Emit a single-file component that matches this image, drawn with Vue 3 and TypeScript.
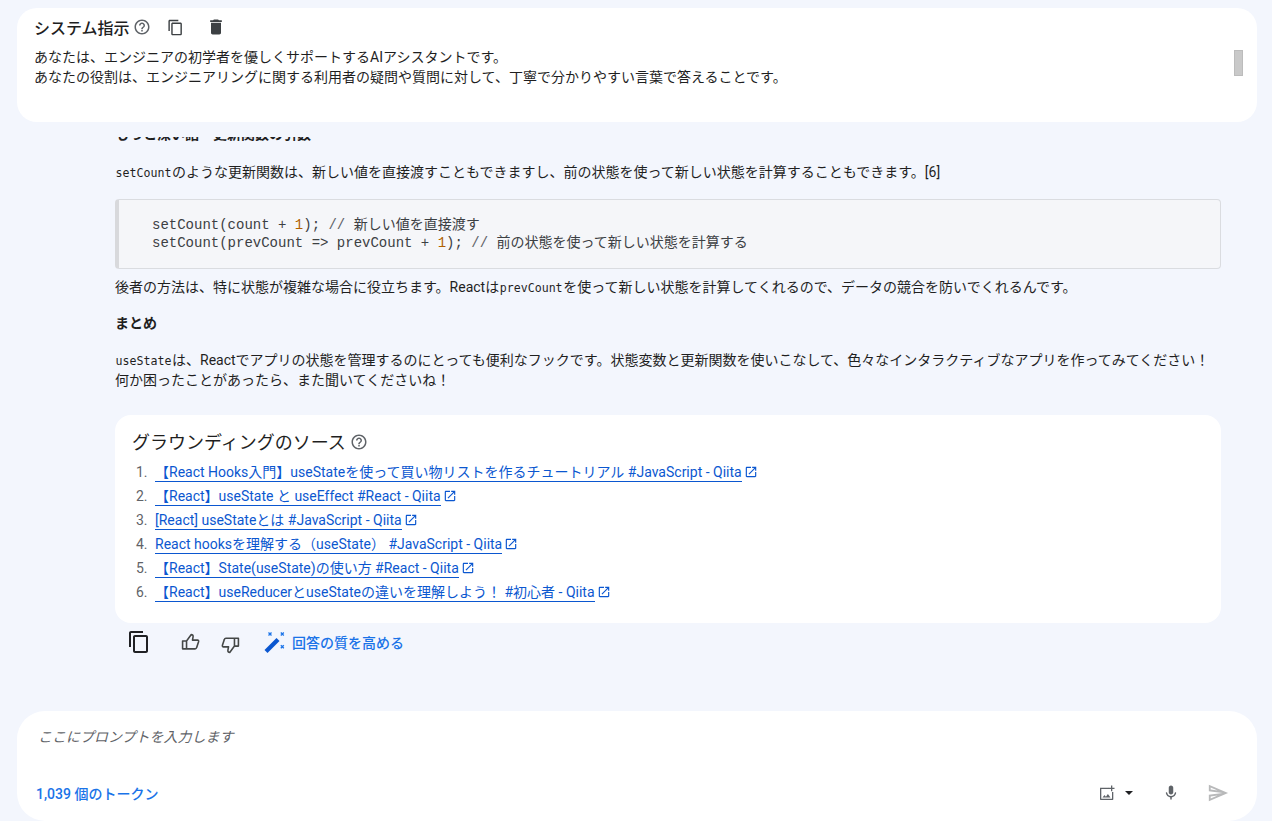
<script setup lang="ts">
const links = [
  '【React Hooks入門】useStateを使って買い物リストを作るチュートリアル #JavaScript - Qiita',
  '【React】useState と useEffect #React - Qiita',
  '[React] useStateとは #JavaScript - Qiita',
  'React hooksを理解する（useState） #JavaScript - Qiita',
  '【React】State(useState)の使い方 #React - Qiita',
  '【React】useReducerとuseStateの違いを理解しよう！ #初心者 - Qiita',
]
</script>

<template>
  <div class="page">
    <header class="system">
      <div class="sys-head">
        <span class="sys-title">システム指示</span>
        <svg class="help" viewBox="0 0 24 24" width="18" height="18"><path fill="#5f6368" d="M11 18h2v-2h-2v2zm1-16C6.48 2 2 6.48 2 12s4.48 10 10 10 10-4.48 10-10S17.52 2 12 2zm0 18c-4.41 0-8-3.59-8-8s3.59-8 8-8 8 3.59 8 8-3.59 8-8 8zm0-14c-2.21 0-4 1.79-4 4h2c0-1.1.9-2 2-2s2 .9 2 2c0 2-3 1.75-3 5h2c0-2.25 3-2.5 3-5 0-2.21-1.79-4-4-4z"/></svg>
        <svg class="sys-copy" viewBox="0 0 24 24" width="17" height="17"><path fill="#3c4043" d="M16 1H4c-1.1 0-2 .9-2 2v14h2V3h12V1zm3 4H8c-1.1 0-2 .9-2 2v14c0 1.1.9 2 2 2h11c1.1 0 2-.9 2-2V7c0-1.1-.9-2-2-2zm0 16H8V7h11v14z"/></svg>
        <svg class="sys-trash" viewBox="0 0 24 24" width="20" height="20"><path fill="#3c4043" d="M6 19c0 1.1.9 2 2 2h8c1.1 0 2-.9 2-2V7H6v12zM19 4h-3.500l-1-1h-5l-1 1H5v2h14V4z"/></svg>
      </div>
      <p class="sys-text">あなたは、エンジニアの初学者を優しくサポートするAIアシスタントです。<br>あなたの役割は、エンジニアリングに関する利用者の疑問や質問に対して、丁寧で分かりやすい言葉で答えることです。</p>
      <div class="thumb"></div>
    </header>

    <main class="chat">
      <div class="scrolled">
        <p class="heading clipped">もっと深い話・更新関数の引数</p>
        <p class="para"><code>setCount</code>のような更新関数は、新しい値を直接渡すこともできますし、前の状態を使って新しい状態を計算することもできます。[6]</p>
        <div class="code">
          <div class="code-line">setCount(count + <span class="num">1</span>); <span class="com">//</span> 新しい値を直接渡す</div>
          <div class="code-line">setCount(prevCount => prevCount + <span class="num">1</span>); <span class="com">//</span> 前の状態を使って新しい状態を計算する</div>
        </div>
        <p class="para after-code">後者の方法は、特に状態が複雑な場合に役立ちます。Reactは<code>prevCount</code>を使って新しい状態を計算してくれるので、データの競合を防いでくれるんです。</p>
        <p class="heading spaced">まとめ</p>
        <p class="para summary"><code>useState</code>は、Reactでアプリの状態を管理するのにとっても便利なフックです。状態変数と更新関数を使いこなして、色々なインタラクティブなアプリを作ってみてください！<br>何か困ったことがあったら、また聞いてくださいね！</p>

        <section class="sources">
          <h2 class="src-title">グラウンディングのソース
            <svg viewBox="0 0 24 24" width="18" height="18"><path fill="#5f6368" d="M11 18h2v-2h-2v2zm1-16C6.48 2 2 6.48 2 12s4.48 10 10 10 10-4.48 10-10S17.52 2 12 2zm0 18c-4.41 0-8-3.59-8-8s3.59-8 8-8 8 3.59 8 8-3.59 8-8 8zm0-14c-2.21 0-4 1.79-4 4h2c0-1.1.9-2 2-2s2 .9 2 2c0 2-3 1.75-3 5h2c0-2.25 3-2.5 3-5 0-2.21-1.79-4-4-4z"/></svg>
          </h2>
          <ol class="src-list">
            <li v-for="l in links" :key="l">
              <a class="src-link">{{ l }}</a>
              <svg class="ext" viewBox="0 0 24 24" width="14" height="14"><path fill="#0b57d0" d="M19 19H5V5h7V3H5c-1.11 0-2 .9-2 2v14c0 1.1.89 2 2 2h14c1.1 0 2-.9 2-2v-7h-2v7zM14 3v2h3.59l-9.83 9.83 1.41 1.41L19 6.41V10h2V3h-7z"/></svg>
            </li>
          </ol>
        </section>

        <div class="actions">
          <svg class="act-copy" viewBox="0 0 24 24" width="24" height="24"><path fill="#202124" d="M16 1H4c-1.1 0-2 .9-2 2v14h2V3h12V1zm3 4H8c-1.1 0-2 .9-2 2v14c0 1.1.9 2 2 2h11c1.1 0 2-.9 2-2V7c0-1.1-.9-2-2-2zm0 16H8V7h11v14z"/></svg>
          <svg class="act-up" viewBox="0 0 24 24" width="19" height="19"><path fill="none" stroke="#444746" stroke-width="2" stroke-linejoin="round" d="M2 10h5v10H2zM7 10l6-8c1.500 0 2.500 1 2.300 2.500L14.500 9H21c1 0 1.500 1 1.200 2l-2.500 7.500c-.2.800-.9 1.500-1.900 1.500H7"/></svg>
          <svg class="act-down" viewBox="0 0 24 24" width="19" height="19"><path fill="none" stroke="#444746" stroke-width="2" stroke-linejoin="round" d="M22 14h-5V4h5zM17 14l-6 8c-1.500 0-2.500-1-2.300-2.500L9.500 15H3c-1 0-1.500-1-1.200-2l2.500-7.500C4.500 4.700 5.200 4 6.200 4H17"/></svg>
          <span class="improve">
            <svg viewBox="0 0 24 24" width="24" height="24">
              <path d="M3 21.500 15 9.500" stroke="#0b57d0" stroke-width="4.200" fill="none"/>
              <path d="M5.500 2.500l3 3M8.500 2.500l-3 3M17.800 2.500l3 3M20.800 2.500l-3 3M17.800 15.200l3 3M20.800 15.200l-3 3" stroke="#1a73e8" stroke-width="1.300" fill="none"/>
            </svg>
            回答の質を高める
          </span>
        </div>
      </div>
    </main>

    <footer class="prompt">
      <div class="placeholder">ここにプロンプトを入力します</div>
      <div class="prompt-bar">
        <span class="tokens">1,039 個のトークン</span>
        <div class="tools">
          <svg class="img-icon" viewBox="0 0 16 16" width="16" height="16"><path fill="#5f6368" d="M1 2.700h9V4H2.300v9.700H13V7h1.300v7.300c0 .4-.3.7-.7.7H1.700a.7.7 0 0 1-.7-.7z"/><path fill="#5f6368" d="M12 .5h1.300v2.200h2.200V4h-2.200v2.200H12V4H9.800V2.700H12z"/><path fill="#5f6368" d="M3.500 12.500l2-2.500 1.400 1.700 2-2.600 2.600 3.400z"/></svg>
          <span class="caret"></span>
          <svg class="mic" viewBox="0 0 24 24" width="18" height="18"><path fill="#5f6368" d="M12 14c1.66 0 3-1.34 3-3V5c0-1.66-1.34-3-3-3S9 3.34 9 5v6c0 1.66 1.34 3 3 3zm5.910-3c-.49 0-.9.36-.98.85C16.520 14.200 14.470 16 12 16s-4.520-1.800-4.930-4.150c-.08-.49-.49-.85-.98-.85-.61 0-1.090.54-1 1.140.49 3 2.890 5.350 5.910 5.780V20c0 .55.45 1 1 1s1-.45 1-1v-2.080c3.020-.43 5.420-2.780 5.910-5.780.1-.6-.39-1.140-1-1.140z"/></svg>
          <svg class="send" viewBox="0 0 24 24" width="22" height="22"><path fill="#b8b9ba" d="M4.010 6.030l7.510 3.220-7.520-1 .01-2.220m7.500 8.720L4 17.970v-2.220l7.510-1M2.010 3 2 10l15 2-15 2 .01 7L23 12 2.010 3z"/></svg>
        </div>
      </div>
    </footer>
  </div>
</template>

<style>
html, body { margin: 0; padding: 0; background: #f3f6fd; overflow: hidden; }
</style>

<style scoped>
.page {
  width: 1272px;
  height: 821px;
  display: flex;
  flex-direction: column;
  overflow: hidden;
  background: #f3f6fd;
  color: #1f1f1f;
  font-family: Roboto, "Noto Sans CJK JP", sans-serif;
  font-size: 14px;
}
.system {
  position: relative;
  flex: none;
  box-sizing: border-box;
  height: 114px;
  margin: 8px 15px 15px 17px;
  padding: 7px 17px;
  background: #fff;
  border-radius: 20px;
}
.sys-head { display: flex; align-items: center; height: 24px; }
.sys-title { font-size: 16px; font-weight: 500; }
.help { margin-left: 3px; }
.sys-copy { margin-left: 16px; }
.sys-trash { margin-left: 22px; }
.sys-text { margin: 8px 0 0; line-height: 20px; }
.thumb {
  position: absolute;
  right: 14px;
  top: 42px;
  box-sizing: border-box;
  width: 9px;
  height: 26px;
  background: #c9c9c9;
  border: 1px solid #bcbcbc;
}
.chat { flex: 1; min-height: 0; overflow: hidden; padding: 0 51px 0 115px; }
.scrolled { margin-top: -13px; }
p { margin: 0; }
.heading { font-weight: 700; line-height: 20px; }
.clipped { margin-bottom: 18px; }
.spaced { margin-top: 16px; }
.para { line-height: 20px; margin-top: 16px; }
.clipped + .para { margin-top: 0; }
.summary { margin-top: 17px; }
code { font-family: "DejaVu Sans Mono", "Liberation Mono", monospace; font-size: 11.6px; line-height: 1; padding: 0 0.6px; }
.code {
  margin: 17px 0 0;
  box-sizing: border-box;
  height: 70px;
  padding: 16px 33px;
  background: #f5f6f9;
  border: 1px solid #dadce0;
  border-left: 4px solid #d8d9dc;
  border-radius: 4px;
  font-family: "Liberation Mono", "Noto Sans CJK JP", monospace;
  font-size: 14px;
  line-height: 18px;
  color: #3c4043;
}
.code-line { white-space: pre; height: 18px; }
.num { color: #b06000; }
.com { color: #5f6368; }
.after-code { margin-top: 8px; }
.sources {
  box-sizing: border-box;
  height: 208px;
  margin-top: 25px;
  padding: 16px 17px;
  background: #fff;
  border-radius: 16px;
}
.src-title { margin: 0; display: flex; align-items: center; gap: 4px; font-size: 18px; font-weight: 400; line-height: 24px; }
.src-title svg { margin-bottom: 3px; }
.src-list { margin: 5px 0 0; padding: 0 0 0 19px; }
.src-list li { height: 24px; line-height: 24px; padding-left: 4px; color: #5f6368; }
.src-link { color: #0b57d0; border-bottom: 1px solid #0b57d0; padding-bottom: 1px; }
.ext { vertical-align: -2px; margin-left: 2px; }
.actions { display: flex; align-items: center; height: 40px; margin-top: -1px; }
.act-copy { margin-left: 12px; }
.act-up { margin-left: 30px; }
.act-down { margin-left: 21px; transform: translateY(2px); }
.improve { display: flex; align-items: center; gap: 5px; margin-left: 23px; color: #1a73e8; font-weight: 500; }
.prompt {
  flex: none;
  box-sizing: border-box;
  height: 110px;
  margin: 0 15px 0 17px;
  padding: 16px 28px 0 19px;
  background: #fff;
  border-radius: 28px;
}
.placeholder { margin-left: 2px; font-style: italic; color: #5f6368; line-height: 20px; }
.prompt-bar { display: flex; justify-content: space-between; align-items: center; height: 24px; margin-top: 34px; }
.tokens { color: #1a73e8; font-weight: 500; }
.tools { display: flex; align-items: center; }
.caret { margin-left: 10px; width: 0; height: 0; border: 4px solid transparent; border-top-color: #202124; border-bottom: 0; }
.mic { margin-left: 29px; }
.send { margin-left: 27px; }
</style>
